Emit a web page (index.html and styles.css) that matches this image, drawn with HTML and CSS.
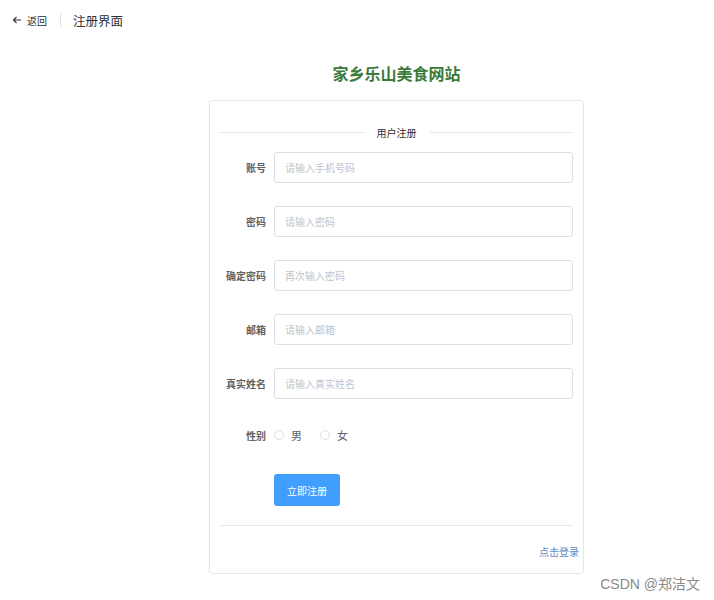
FILE: index.html
```html
<!DOCTYPE html>
<html lang="zh-CN">
<head>
  <meta charset="UTF-8">
  <title>注册界面</title>
  <link rel="stylesheet" href="styles.css">
</head>
<body>

  <!-- page header -->
  <div class="page-header">
    <span class="back">
      <svg class="back-icon" width="10" height="10" viewBox="0 0 10 10">
        <path d="M9 5H1.5M4.5 2L1.5 5l3 3" fill="none" stroke="#303133" stroke-width="1.1"/>
      </svg>
      返回
    </span>
    <span class="sep"></span>
    <span class="header-title">注册界面</span>
  </div>

  <div class="main">
    <h1 class="site-title">家乡乐山美食网站</h1>

    <div class="card">
      <div class="divider"><span>用户注册</span></div>

      <div class="form">
        <div class="form-item">
          <label class="form-label">账号</label>
          <input class="form-input" type="text" placeholder="请输入手机号码">
        </div>
        <div class="form-item">
          <label class="form-label">密码</label>
          <input class="form-input" type="password" placeholder="请输入密码">
        </div>
        <div class="form-item">
          <label class="form-label">确定密码</label>
          <input class="form-input" type="password" placeholder="再次输入密码">
        </div>
        <div class="form-item">
          <label class="form-label">邮箱</label>
          <input class="form-input" type="text" placeholder="请输入邮箱">
        </div>
        <div class="form-item">
          <label class="form-label">真实姓名</label>
          <input class="form-input" type="text" placeholder="请输入真实姓名">
        </div>
        <div class="form-item radio-row">
          <label class="form-label">性别</label>
          <span class="radio"><span class="radio-dot"></span>男</span>
          <span class="radio"><span class="radio-dot"></span>女</span>
        </div>
        <div class="form-item btn-row">
          <button type="button" class="btn">立即注册</button>
        </div>
      </div>

      <div class="line"></div>
      <div class="login-link"><a href="#">点击登录</a></div>
    </div>
  </div>

  <div class="watermark">CSDN @郑洁文</div>

</body>
</html>
```

FILE: styles.css
```css
body {
  margin: 0;
  padding: 0;
  font-family: "Noto Sans CJK SC", "Liberation Sans", sans-serif;
  color: #606266;
  background-color: #fff;
}
.page-header {
  display: flex;
  align-items: center;
  height: 40px;
  padding-left: 12px;
}
.back {
  display: flex;
  align-items: center;
  font-size: 10px;
  color: #303133;
}
.back-icon {
  margin-right: 5px;
}
.sep {
  width: 1px;
  height: 14px;
  background-color: #dcdfe6;
  margin: 0 12px 0 13px;
}
.header-title {
  font-size: 12.5px;
  color: #303133;
}
.main {
  width: 375px;
  margin-left: 209px;
}
.site-title {
  margin: 20px 0 0;
  height: 40px;
  line-height: 27px;
  text-align: center;
  font-size: 16px;
  font-weight: bold;
  color: #3b7a3b;
}
.card {
  border: 1px solid #e4e7ed;
  border-radius: 4px;
  padding: 20px 10px 13px;
  box-shadow: 0 1px 3px rgba(0, 0, 0, 0.04);
}
.divider {
  display: flex;
  align-items: center;
  height: 22px;
  font-size: 10px;
  color: #303133;
}
.divider::before, .divider::after {
  content: "";
  flex: 1;
  height: 1px;
  background-color: #e4e7ed;
}
.divider span {
  padding: 0 13px;
}
.form {
  margin-top: 8px;
}
.form-item {
  display: flex;
  align-items: center;
  height: 32px;
  margin-bottom: 22px;
}
.form-label {
  width: 46px;
  padding-right: 8px;
  text-align: right;
  font-size: 10px;
  font-weight: bold;
  color: #606266;
  white-space: nowrap;
}
.form-input {
  flex: 1;
  height: 31px;
  box-sizing: border-box;
  border: 1px solid #dcdfe6;
  border-radius: 3px;
  padding: 0 10px;
  font-size: 10px;
  font-family: inherit;
  outline: none;
}
.form-input::placeholder {
  color: #c0c4cc;
}
.radio-row {
  height: 28px;
  margin-bottom: 25px;
}
.radio {
  display: flex;
  align-items: center;
  font-size: 11px;
  color: #606266;
  margin-right: 18px;
}
.radio-dot {
  width: 8px;
  height: 8px;
  border: 1px solid #dcdfe6;
  border-radius: 50%;
  margin-right: 7px;
}
.btn-row {
  padding-left: 54px;
  margin-bottom: 19px;
}
.btn {
  width: 66px;
  height: 32px;
  background-color: #409eff;
  color: white;
  border: none;
  border-radius: 3px;
  font-size: 10px;
  font-family: inherit;
}
.line {
  height: 1px;
  background-color: #e4e7ed;
}
.login-link {
  text-align: right;
  margin-top: 18px;
  margin-right: -6px;
  font-size: 10px;
  line-height: 16px;
}
.login-link a {
  color: #5d8bc8;
  text-decoration: none;
}
.watermark {
  position: absolute;
  right: 14px;
  top: 573px;
  font-size: 14px;
  color: #8a8a8a;
  font-family: "Liberation Sans", "Noto Sans CJK SC", sans-serif;
}
```
